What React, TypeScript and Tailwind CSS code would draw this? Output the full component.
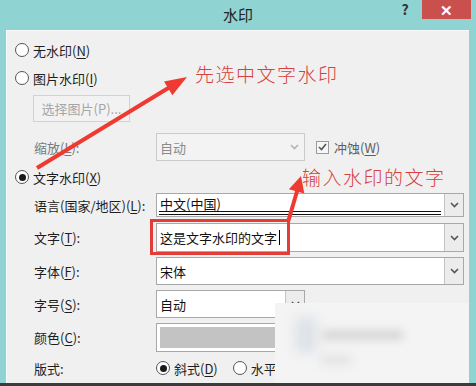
import React from 'react';

const FONT = "font-['Noto_Sans_CJK_SC','Noto_Sans',sans-serif]";

function Radio({ checked = false }: { checked?: boolean }) {
  return (
    <span className="w-[14px] h-[14px] rounded-full border border-[#555] bg-white flex items-center justify-center shrink-0">
      {checked && <span className="w-[7px] h-[7px] rounded-full bg-[#1a1a1a]" />}
    </span>
  );
}

function Chevron({ color = '#555' }: { color?: string }) {
  return (
    <svg width="9" height="6" viewBox="0 0 9 6">
      <polyline points="1,1 4.5,4.5 8,1" fill="none" stroke={color} strokeWidth="1.6" />
    </svg>
  );
}

function Key({ k }: { k: string }) {
  return <span className="underline underline-offset-2">{k}</span>;
}

interface RowProps {
  label: React.ReactNode;
  className: string;
  children: React.ReactNode;
  muted?: boolean;
}

function Row({ label, className, children, muted }: RowProps) {
  return (
    <div className={`flex items-center ${className}`}>
      <div className={`w-[149px] pl-[27px] ${muted ? 'text-[#7a7a7a]' : 'text-[#1e1e1e]'}`}>{label}</div>
      {children}
    </div>
  );
}

function Combo({
  children,
  height,
  width = 'w-[308px]',
  align = 'items-center',
}: {
  children: React.ReactNode;
  height: string;
  width?: string;
  align?: string;
}) {
  return (
    <div className={`${width} ${height} flex border border-[#a8a8a8] bg-white`}>
      <div className={`flex-1 flex ${align} pl-[3px] relative`}>{children}</div>
      <div className="w-[19px] border-l border-[#c4c4c4] bg-[#ececec] flex items-center justify-center">
        <Chevron />
      </div>
    </div>
  );
}

export default function App() {
  return (
    <div className={`w-[476px] h-[386px] relative overflow-hidden bg-[#8fd4d2] text-[13px] leading-none ${FONT}`}>
      {/* Title bar */}
      <div className="h-[30px] grid grid-cols-[1fr_auto_1fr]">
        <div />
        <div className="pt-[7px] text-[15px] text-[#222]">水印</div>
        <div className="flex justify-end items-start pr-[5px]">
          <div className="w-[20px] pt-[2px] text-center text-[14px] font-bold text-[#333]">?</div>
          <div className="ml-[7px] w-[49px] h-[19px] bg-[#c9504c] flex items-center justify-center text-white text-[15px] font-bold">
            ✕
          </div>
        </div>
      </div>

      {/* Body */}
      <div className="flex h-[353px]">
        <div className="w-[6px]" />
        <div className="flex-1 bg-[#f0f0f0] border-l border-t border-[#fafafa] flex flex-col">
          <div className="mt-[9px] h-[20px] flex items-center pl-[8px] gap-[4px] text-[#1e1e1e]">
            <Radio />
            <span>
              无水印(<Key k="N" />)
            </span>
          </div>
          <div className="mt-[8px] h-[20px] flex items-center pl-[8px] gap-[4px] text-[#1e1e1e]">
            <Radio />
            <span>
              图片水印(<Key k="I" />)
            </span>
          </div>
          <div className="mt-[7px] ml-[26px] w-[97px] h-[27px] border border-[#d2d2d2] bg-[#f2f2f2] flex items-center justify-center text-[#a6a6a6]">
            选择图片(P)...
          </div>
          <Row className="mt-[11px] h-[28px]" muted label={<>缩放(<Key k="L" />):</>}>
            <div className="w-[149px] h-[28px] border border-[#cacaca] bg-[#f3f3f3] flex items-center">
              <span className="flex-1 pl-[3px] text-[#8a8a8a]">自动</span>
              <span className="w-[19px] flex justify-center">
                <Chevron color="#b4b4b4" />
              </span>
            </div>
            <div className="ml-[11px] flex items-center gap-[5px] text-[#5e5e5e]">
              <span className="w-[13px] h-[13px] border border-[#9a9a9a] bg-[#f6f6f6] flex items-center justify-center">
                <svg width="9" height="8" viewBox="0 0 9 8">
                  <polyline points="1,4 3.5,6.5 8,1" fill="none" stroke="#555" strokeWidth="1.6" />
                </svg>
              </span>
              <span>
                冲蚀(<Key k="W" />)
              </span>
            </div>
          </Row>
          <div className="mt-[6px] h-[20px] flex items-center pl-[8px] gap-[4px] text-[#1e1e1e]">
            <Radio checked />
            <span>
              文字水印(<Key k="X" />)
            </span>
          </div>
          <Row className="mt-[6px] h-[24px]" label={<>语言(国家/地区)(<Key k="L" />):</>}>
            <Combo height="h-[24px]" align="items-start pt-[3px]">
              <span className="text-[#111]">中文(中国)</span>
              <span className="absolute left-[2px] right-[3px] bottom-[1px] h-[4px] border-y border-[#111]" />
            </Combo>
          </Row>
          <Row className="mt-[6px] h-[29px]" label={<>文字(<Key k="T" />):</>}>
            <Combo height="h-[29px]">
              <span className="text-[#111]">这是文字水印的文字</span>
              <span className="ml-[2px] w-px h-[15px] bg-black" />
            </Combo>
          </Row>
          <Row className="mt-[5px] h-[28px]" label={<>字体(<Key k="F" />):</>}>
            <Combo height="h-[28px]">
              <span className="text-[#111]">宋体</span>
            </Combo>
          </Row>
          <Row className="mt-[5px] h-[28px]" label={<>字号(<Key k="S" />):</>}>
            <Combo height="h-[28px]" width="w-[149px]">
              <span className="text-[#111]">自动</span>
            </Combo>
          </Row>
          <Row className="mt-[5px] h-[29px]" label={<>颜色(<Key k="C" />):</>}>
            <div className="w-[149px] h-[29px] border border-[#a8a8a8] bg-white p-[3px]">
              <div className="w-full h-full bg-[#c3c3c3]" />
            </div>
          </Row>
          <Row className="mt-[6px] h-[20px]" label="版式:">
            <div className="flex items-center gap-[4px] text-[#1e1e1e]">
              <Radio checked />
              <span>
                斜式(<Key k="D" />)
              </span>
            </div>
            <div className="ml-[15px] flex items-center gap-[4px] text-[#1e1e1e]">
              <Radio />
              <span>
                水平(<Key k="H" />)
              </span>
            </div>
          </Row>
        </div>
        <div className="w-[7px]" />
      </div>
      <div className="h-[3px] bg-[#3b3b3b]" />

      {/* Blurred watermark patch */}
      <div className="absolute left-[275px] top-[303px] w-[194px] h-[80px] bg-[#f4f4f4] overflow-hidden">
        <div className="absolute left-[20px] top-[14px] w-[22px] h-[36px] rounded bg-[#dde2e8] blur-[6px]" />
        <div className="absolute left-[48px] top-[28px] w-[80px] h-[8px] bg-[#cfcfcf] blur-[5px]" />
        <div className="absolute left-[46px] top-[52px] w-[30px] h-[10px] bg-[#e2e2e2] blur-[5px]" />
      </div>

      {/* Annotations */}
      <div className="absolute left-[150px] top-[219px] w-[140px] h-[36px] border-[3px] border-[#e23d36]" />
      <svg className="absolute inset-0 pointer-events-none" width="476" height="386" viewBox="0 0 476 386">
        <line x1="37" y1="168" x2="170" y2="87" stroke="#ee3a30" strokeWidth="4" />
        <polygon points="187,77 172.4,95.2 164,81.6" fill="#ee3a30" />
        <line x1="288" y1="222" x2="298" y2="188" stroke="#ee3a30" strokeWidth="4" />
        <polygon points="301,176 304.3,193.6 288.9,189.2" fill="#ee3a30" />
      </svg>
      <div className="absolute left-[195px] top-[64px] text-[19px] font-light tracking-[1.5px] text-[#d9403c]">先选中文字水印</div>
      <div className="absolute left-[302px] top-[167px] text-[19px] font-light tracking-[1.5px] text-[#d9403c]">输入水印的文字</div>
    </div>
  );
}
